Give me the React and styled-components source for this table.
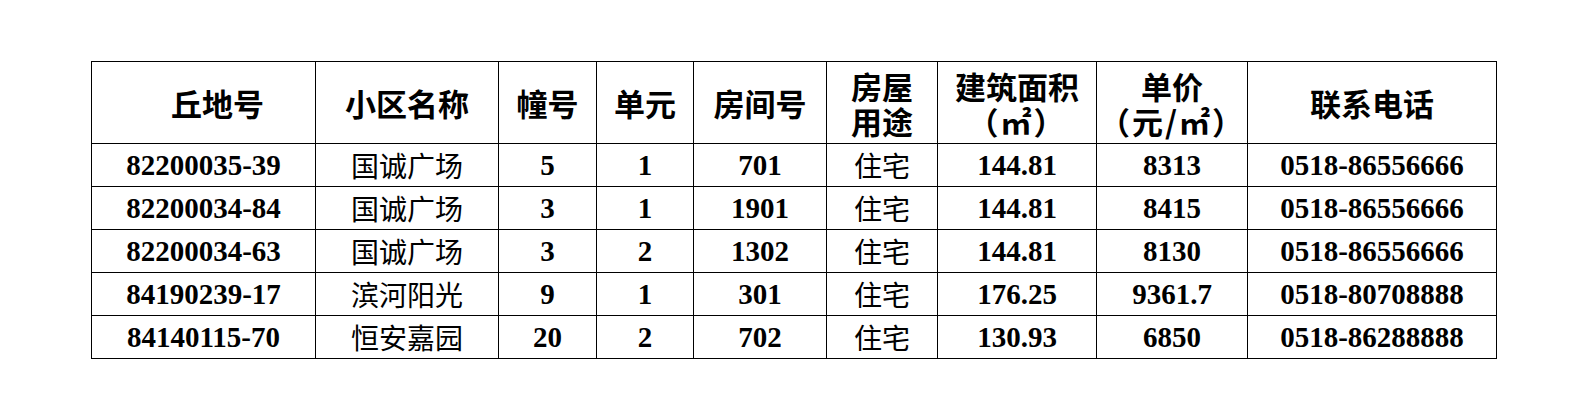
import React from 'react';
import styled, { createGlobalStyle } from 'styled-components';

const GlobalStyle = createGlobalStyle`
  html, body {
    margin: 0;
    padding: 0;
    background: #fff;
  }
`;

const Page = styled.div`
  padding: 61px 0 0 91px;
`;

const Table = styled.table`
  border-collapse: collapse;
  table-layout: fixed;
  width: 1405px;
  color: #000;
`;

const HeadCell = styled.th`
  border: 1.5px solid #000;
  height: 81px;
  padding: 0 0 0 ${p => p.$indent || 0}px;
  font-family: "Noto Sans CJK SC", "Noto Sans", sans-serif;
  font-weight: 700;
  font-size: 31px;
  line-height: 35px;
  text-align: center;
  vertical-align: middle;
`;

const HeadLine = styled.div`
  white-space: nowrap;
  letter-spacing: ${p => (p.$paren ? '2px' : '0')};
`;

const Cell = styled.td`
  border: 1.5px solid #000;
  height: 42px;
  padding: 0;
  text-align: center;
  vertical-align: middle;
  font-family: ${p => (p.$cjk ? '"Noto Sans CJK SC", sans-serif' : '"Liberation Serif", "Times New Roman", serif')};
  font-weight: ${p => (p.$cjk ? 400 : 700)};
  font-size: ${p => (p.$cjk ? '28px' : '29px')};
  line-height: 1;
`;

const widths = [224, 183, 98, 97, 133, 111, 159, 151, 249];

const headers = [
  { label: ['丘地号'], indent: 28 },
  { label: ['小区名称'] },
  { label: ['幢号'] },
  { label: ['单元'] },
  { label: ['房间号'] },
  { label: ['房屋', '用途'] },
  { label: ['建筑面积', '（㎡）'] },
  { label: ['单价', '（元/㎡）'] },
  { label: ['联系电话'] },
];

const rows = [
  ['82200035-39', '国诚广场', '5', '1', '701', '住宅', '144.81', '8313', '0518-86556666'],
  ['82200034-84', '国诚广场', '3', '1', '1901', '住宅', '144.81', '8415', '0518-86556666'],
  ['82200034-63', '国诚广场', '3', '2', '1302', '住宅', '144.81', '8130', '0518-86556666'],
  ['84190239-17', '滨河阳光', '9', '1', '301', '住宅', '176.25', '9361.7', '0518-80708888'],
  ['84140115-70', '恒安嘉园', '20', '2', '702', '住宅', '130.93', '6850', '0518-86288888'],
];

const cjkCols = [1, 5];

export default function App() {
  return (
    <>
      <GlobalStyle />
      <Page>
        <Table>
          <colgroup>
            {widths.map((w, i) => (
              <col key={i} style={{ width: w }} />
            ))}
          </colgroup>
          <thead>
            <tr>
              {headers.map((h, i) => (
                <HeadCell key={i} $indent={h.indent}>
                  {h.label.map((line, j) => (
                    <HeadLine key={j} $paren={line.startsWith('（')}>
                      {line}
                    </HeadLine>
                  ))}
                </HeadCell>
              ))}
            </tr>
          </thead>
          <tbody>
            {rows.map((r, i) => (
              <tr key={i}>
                {r.map((v, j) => (
                  <Cell key={j} $cjk={cjkCols.includes(j)}>
                    {v}
                  </Cell>
                ))}
              </tr>
            ))}
          </tbody>
        </Table>
      </Page>
    </>
  );
}
